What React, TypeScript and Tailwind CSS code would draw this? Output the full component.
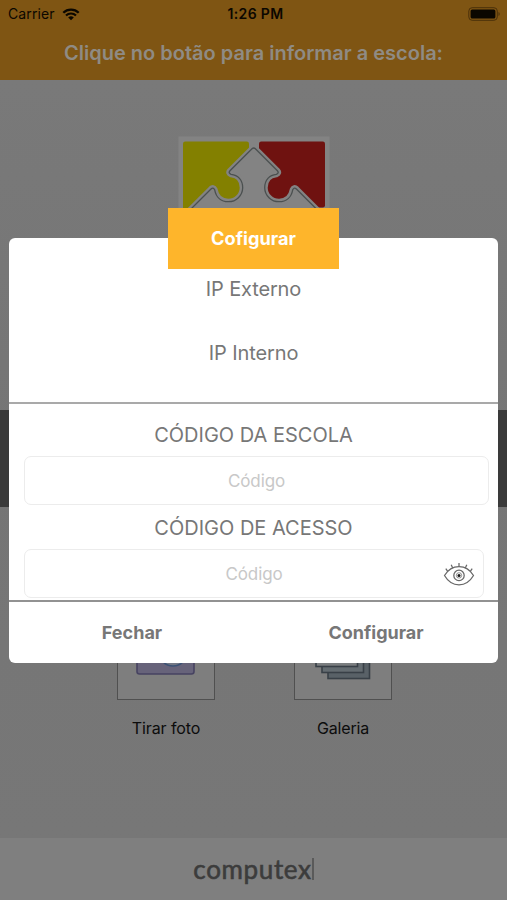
import React from "react";

function StatusBar() {
  return (
    <div className="flex h-7 items-center justify-between pl-[8px] pr-[6px] text-[#0b0700]">
      <div className="flex w-[110px] items-center gap-[7px]">
        <span className="text-[14px] leading-7 tracking-[0.1px]">Carrier</span>
        <svg width="18" height="13" viewBox="0 0 18 13" fill="none">
          <path d="M1.3 4.7a11 11 0 0 1 15.4 0" stroke="currentColor" strokeWidth="2.3" />
          <path d="M4 7.5a7.2 7.2 0 0 1 10 0" stroke="currentColor" strokeWidth="2.2" />
          <path d="M9 12.3 6.2 9.5a4 4 0 0 1 5.6 0z" fill="currentColor" />
        </svg>
      </div>
      <span className="pl-[2px] text-[14px] font-semibold leading-7 tracking-[0.35px]">1:26 PM</span>
      <div className="-mt-px flex w-[110px] justify-end">
        <svg width="33" height="14" viewBox="0 0 33 14">
          <rect x="0.8" y="0.7" width="28.5" height="12.6" rx="3.4" fill="none" stroke="#4a300a" strokeWidth="1" />
          <rect x="2.6" y="2.5" width="24.8" height="9" rx="1.6" fill="currentColor" />
          <path d="M30.5 5c1.6.6 1.6 3.4 0 4z" fill="#4a300a" />
        </svg>
      </div>
    </div>
  );
}

const ARROW =
  "M180 220 L211 189 Q213.3 186.8 214.7 189.8 C216 197 221 201.7 228.3 201.7 A14.2 14.2 0 0 0 242.7 187.7 C242.7 180 238 175 231 174.3 Q228 173 230 170.8 L252 148.8 Q253.7 147.2 255.4 148.8 L277.4 170.8 Q279.4 173 276.4 174.3 C269.4 175 264.7 180 264.7 187.7 A14.2 14.2 0 0 0 279.1 201.7 C286.4 201.7 291.4 197 292.7 189.8 Q294.1 186.8 296.4 189 L327.4 220 Z";

function PuzzleLogo() {
  return (
    <svg width="152" height="84" viewBox="178 136 152 84">
      <rect x="178.5" y="136.5" width="151" height="84" fill="#838383" />
      <rect x="183" y="141.5" width="66" height="90" rx="2.2" fill="#838000" />
      <rect x="259" y="141.5" width="66" height="66" rx="2.2" fill="#6f1210" />
      <path d={ARROW} fill="#838383" stroke="#838383" strokeWidth="6" strokeLinejoin="round" />
      <path d={ARROW} fill="none" stroke="#4b5050" strokeWidth="1.3" />
    </svg>
  );
}

function CameraIcon() {
  return (
    <svg width="60" height="50" viewBox="0 0 60 50">
      <rect x="1" y="8" width="57" height="40" rx="2.5" fill="#67637a" stroke="#474361" strokeWidth="1.6" />
      <circle cx="37" cy="26" r="14" fill="#737885" stroke="#3c5275" strokeWidth="1.5" />
    </svg>
  );
}

function GalleryIcon() {
  return (
    <svg width="56" height="50" viewBox="0 0 56 50" stroke="#394047" strokeWidth="1.6">
      <rect x="13" y="14" width="41.5" height="34.5" fill="#596167" />
      <rect x="7" y="8" width="41.5" height="34.5" fill="#646c71" />
      <rect x="1" y="2" width="41.5" height="34.5" fill="#7b7e80" />
    </svg>
  );
}

function EyeIcon() {
  return (
    <svg width="32" height="26" viewBox="0 0 32 26" fill="none" stroke="#686868" strokeWidth="1.25">
      <path d="M1.5 14.5C5 8.5 10 5.5 16 5.5s11 3 14.5 9C27 20.500 22 23.8 16 23.8S5 20.500 1.5 14.5z" />
      <path d="M16 5.500V2M9.700 6.900 8.200 3.700M22.300 6.900l1.500-3.200M4.700 10.300 2.800 7.600M27.300 10.300l1.900-2.700" />
      <circle cx="16" cy="14.4" r="5.2" />
      <circle cx="16" cy="14.4" r="2.7" strokeWidth="0.7" />
      <circle cx="16" cy="14.4" r="1.5" fill="#151515" stroke="none" />
    </svg>
  );
}

function Page() {
  return (
    <div className="flex h-[900px] flex-col bg-[#777777]">
      <header className="h-[79.5px] shrink-0 bg-[#7f5513]">
        <StatusBar />
        <h1 className="whitespace-nowrap text-center text-[20px] font-semibold leading-[50px] text-[#8f8b84]">
          Clique no botão para informar a escola:
        </h1>
      </header>
      <main className="flex min-h-0 grow flex-col items-center bg-linear-to-b from-[#797979] via-[#757575] to-[#777777]">
        <div className="h-[330.5px] pt-[56.5px]">
          <PuzzleLogo />
        </div>
        <div className="h-[97px] w-full bg-[#3a3a3a]" />
        <div className="flex w-full pl-[117px] pt-[96px]">
          <div className="flex w-[98px] flex-col items-center">
            <div className="flex h-[97px] w-full items-end justify-center border border-[#505050] bg-[#7e7e7e] pb-[23px]">
              <CameraIcon />
            </div>
            <span className="whitespace-nowrap pt-4 text-[16px] leading-6 tracking-[-0.1px] text-[#0c0c0c]">Tirar foto</span>
          </div>
          <div className="ml-[79px] flex w-[98px] flex-col items-center">
            <div className="flex h-[97px] w-full items-end justify-center border border-[#505050] bg-[#7e7e7e] pb-[19px]">
              <GalleryIcon />
            </div>
            <span className="pt-4 text-[16px] leading-6 tracking-[-0.2px] text-[#0c0c0c]">Galeria</span>
          </div>
        </div>
      </main>
      <footer className="flex h-[62.5px] shrink-0 items-center justify-center bg-[#7f7f7f]">
        <span className="font-['Lato',sans-serif] text-[26px] leading-7 tracking-[0.65px] text-[#3c3c3c] [-webkit-text-stroke:0.6px_#3c3c3c]">
          computex
        </span>
        <span className="h-[22px] w-[2px] bg-[#5a5a5a]" />
      </footer>
    </div>
  );
}

function ConfigDialog() {
  return (
    <section className="h-[425px] w-[489px] rounded-[6px] bg-white text-center text-[#777777]">
      <div className="flex h-[166px] flex-col items-center border-b-2 border-[#a9a9a9]">
        <div className="-mt-[30px] h-[60.5px] w-[171px] bg-[#feb52b] text-[18.2px] font-bold leading-[61px] text-white">
          Cofigurar
        </div>
        <p className="pt-1 text-[20px] leading-8 tracking-[-0.15px]">IP Externo</p>
        <p className="pt-8 text-[20px] leading-8 tracking-[-0.1px]">IP Interno</p>
      </div>
      <div className="flex h-[198px] flex-col items-start border-b-2 border-[#929292] pl-[15px]">
        <label className="h-[52px] w-[459px] pt-[15px] text-[20px] leading-8">CÓDIGO DA ESCOLA</label>
        <div className="h-[49px] w-[465px] rounded-[7px] border border-[#ececec] text-[17px] leading-[48px] tracking-[-0.1px] text-[#c8c8c8]">
          Código
        </div>
        <label className="h-[44px] w-[459px] pt-[7px] text-[20px] leading-8">CÓDIGO DE ACESSO</label>
        <div className="flex h-[49px] w-[460px] items-center rounded-[7px] border border-[#ececec] text-[17px] leading-[48px] tracking-[-0.1px] text-[#c8c8c8]">
          <span className="grow pl-[40px]">Código</span>
          <span className="mr-[8px]">
            <EyeIcon />
          </span>
        </div>
      </div>
      <div className="grid grid-cols-2 pl-px text-[18px] font-bold leading-[61px]">
        <button type="button">Fechar</button>
        <button type="button">Configurar</button>
      </div>
    </section>
  );
}

export default function App() {
  return (
    <div className="relative h-[900px] w-[507px] overflow-hidden font-['Inter',sans-serif]">
      <Page />
      <div className="absolute inset-0 flex justify-center pt-[238px]">
        <ConfigDialog />
      </div>
    </div>
  );
}
